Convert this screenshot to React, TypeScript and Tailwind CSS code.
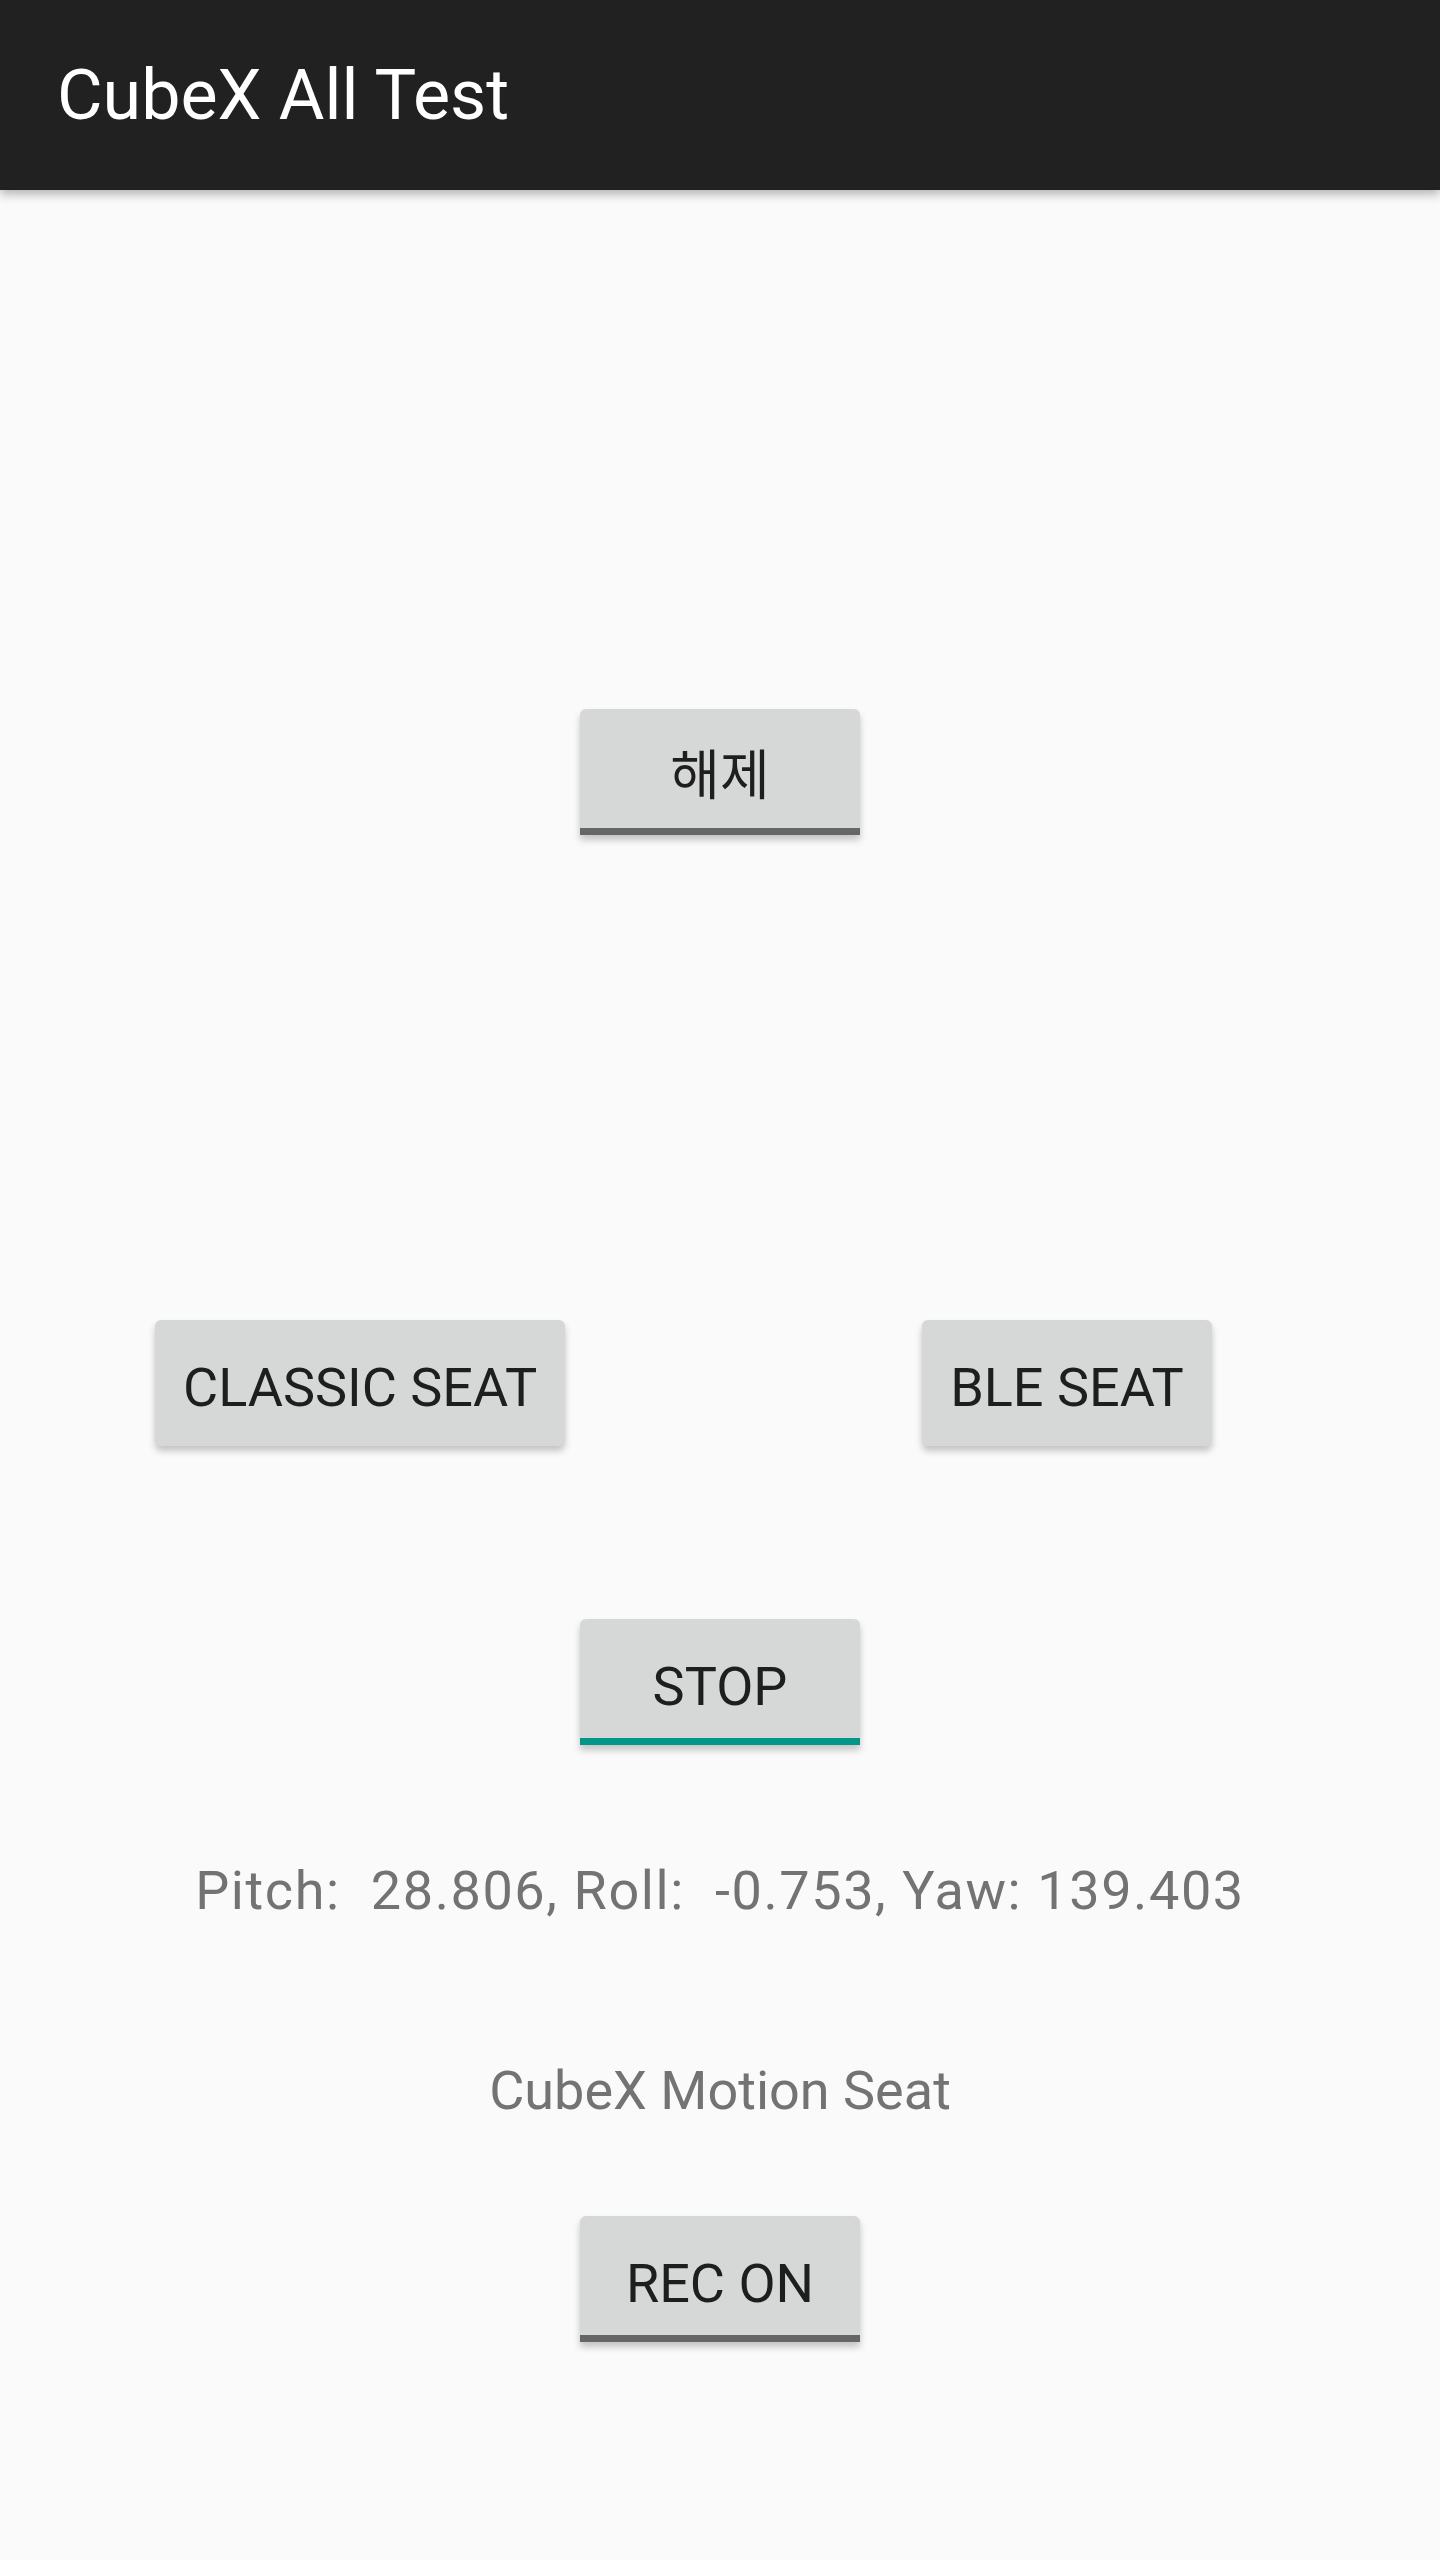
import React from 'react';

type Accent = 'none' | 'gray' | 'teal';

function SeatButton({ label, accent = 'none', wide = false }: { label: string; accent?: Accent; wide?: boolean }) {
  const underline =
    accent === 'teal'
      ? 'border-b-[7px] border-[#009688] rounded-t-[6px]'
      : accent === 'gray'
        ? 'border-b-[7px] border-[#666666] rounded-t-[6px]'
        : 'rounded-[6px]';
  return (
    <button
      type="button"
      className={`h-[126px] ${wide ? 'px-[28px]' : 'w-[280px]'} bg-[#d6d7d7] text-[#1e1e1e] text-[54px] leading-none flex items-center justify-center shadow-[0_5px_7px_rgba(0,0,0,0.22)] ${underline}`}
    >
      <span className={accent === 'none' ? 'translate-y-[5px]' : 'translate-y-[8px]'}>{label}</span>
    </button>
  );
}

export default function App() {
  return (
    <div className="w-[1440px] min-h-[2560px] bg-[#fafafa] font-['Roboto','Noto_Sans','Noto_Sans_CJK_KR',sans-serif]">
      <header className="h-[190px] bg-[#212121] flex items-center pl-[57px] shadow-[0_4px_10px_rgba(0,0,0,0.3)] relative z-10">
        <h1 className="text-white text-[70px] leading-none font-normal">CubeX All Test</h1>
      </header>

      <main className="flex flex-col items-center">
        <div className="mt-[519px]">
          <SeatButton label="해제" accent="gray" />
        </div>

        <div className="mt-[485px] w-full flex pl-[155px] gap-[357px]">
          <SeatButton label="CLASSIC SEAT" wide />
          <SeatButton label="BLE SEAT" wide />
        </div>

        <div className="mt-[173px]">
          <SeatButton label="STOP" accent="teal" />
        </div>

        <p className="mt-[118px] h-[56px] leading-[56px] text-[54px] tracking-[1.6px] text-[#737373] whitespace-pre">
          {'Pitch:  28.806, Roll:  -0.753, Yaw: 139.403'}
        </p>

        <p className="mt-[144px] h-[56px] leading-[56px] text-[54px] text-[#737373]">CubeX Motion Seat</p>

        <div className="mt-[97px]">
          <SeatButton label="REC ON" accent="gray" />
        </div>
      </main>
    </div>
  );
}
